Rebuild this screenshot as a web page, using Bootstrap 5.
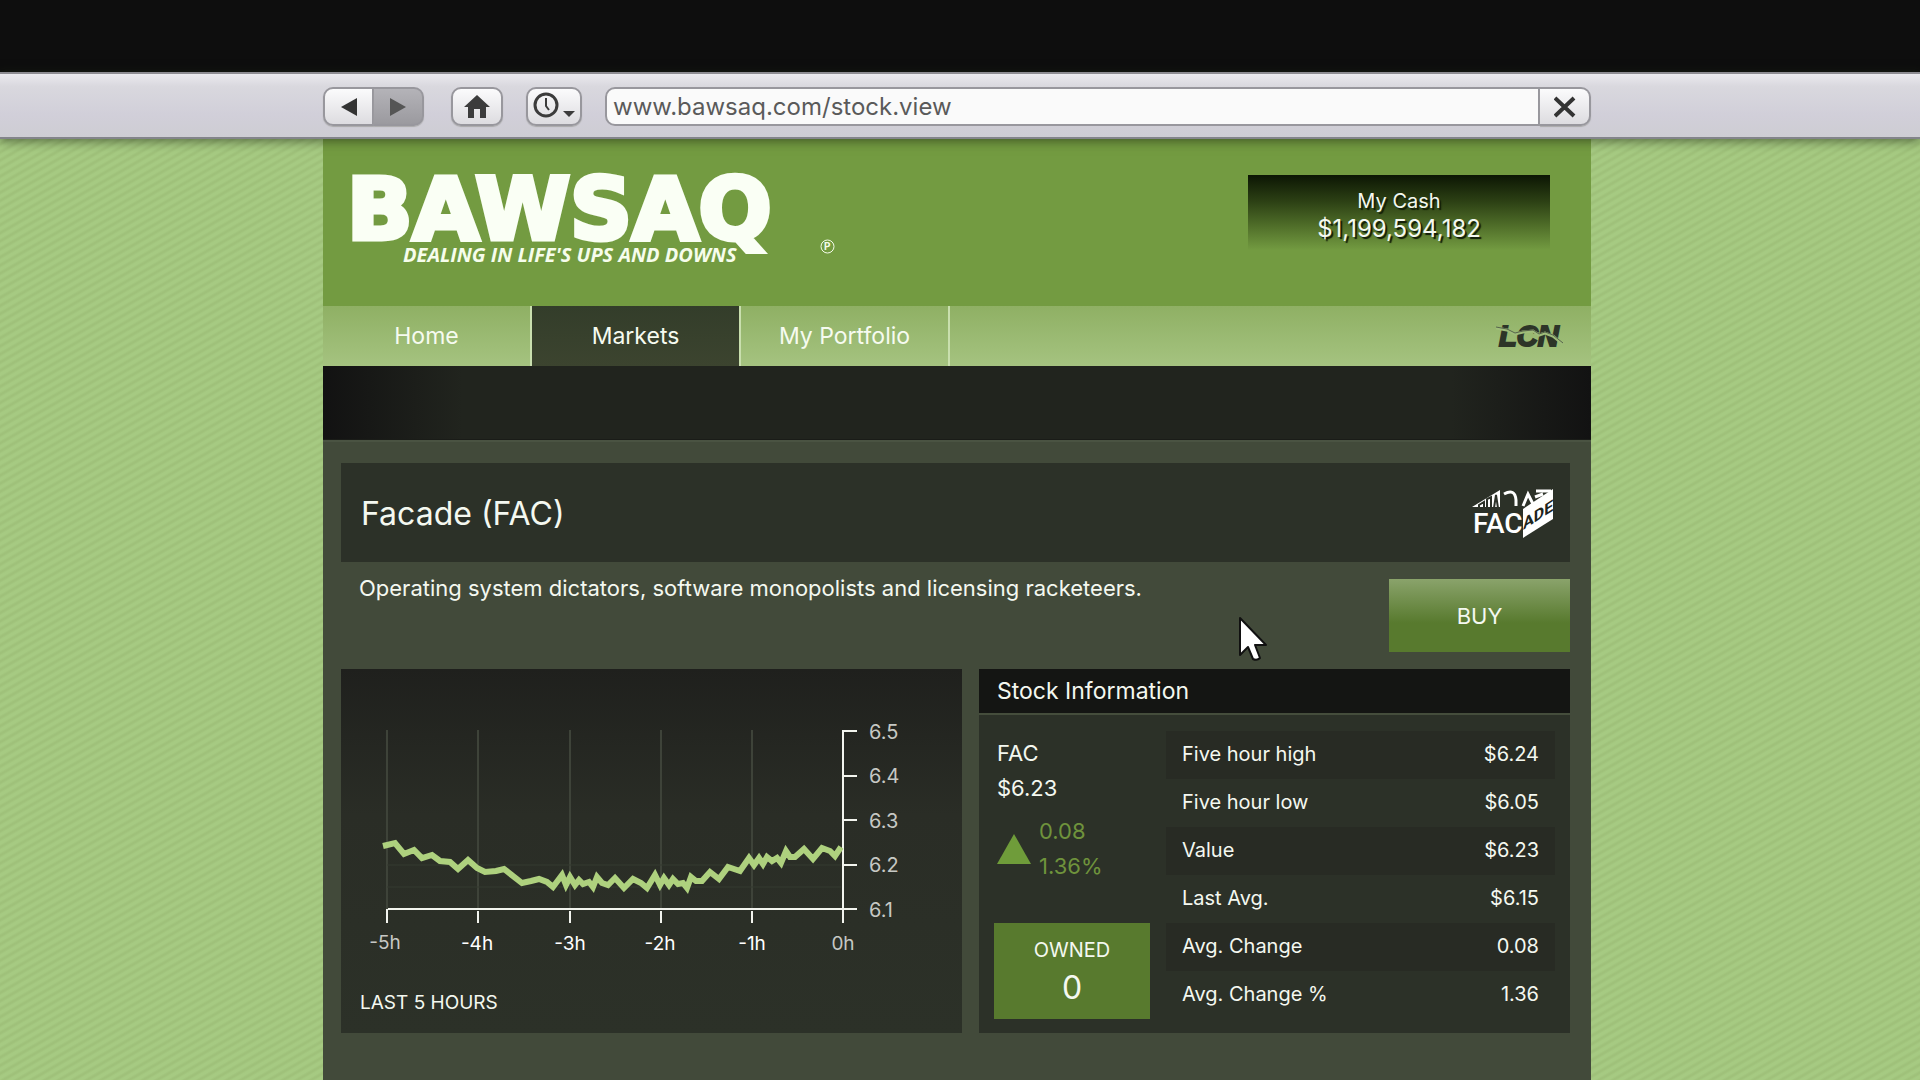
<!DOCTYPE html>
<html lang="en">
<head>
<meta charset="utf-8">
<meta name="viewport" content="width=device-width, initial-scale=1">
<title>BAWSAQ - Facade (FAC)</title>
<link rel="stylesheet" href="https://cdn.jsdelivr.net/npm/bootstrap@5.3.0/dist/css/bootstrap.min.css">
<style>
  body { font-family: Inter, "Liberation Sans", Arial, sans-serif; color: #f4f8f0; font-size: 22px; line-height: 28px; background: #0e0e0e; }
  .letterbox { height: 72px; background: #0e0e0e; }
  .browser-bar { height: 67px; padding-top: 13px; background: linear-gradient(#eae9ee, #d9d8de 20%, #d1cfd9 65%, #cecdd3); border-top: 2px solid #8d8c92; border-bottom: 2px solid #83848a; position: relative; z-index: 2; box-shadow: 0 2px 10px rgba(30, 40, 20, .6); }
  .frame-pad { padding-right: 6px; }
  .frame { width: 100%; max-width: 1268px; margin: 0 auto; }
  .chrome-btn { height: 39px; border: 2px solid #98979d; border-radius: 10px; background: linear-gradient(#fbfbfc, #dddce0); padding: 0; display: flex; align-items: center; justify-content: center; box-shadow: 0 1px 1px #aaa; }
  .nav-back { width: 51px; border-radius: 10px 0 0 10px; }
  .nav-fwd { width: 50px; border-radius: 0 10px 10px 0; background: linear-gradient(#b4b3b8, #9b9a9f); border-left-width: 0; }
  .home-btn { width: 52px; margin-left: 27px; }
  .hist-btn { width: 56px; margin-left: 23px; }
  .addr { height: 39px; margin-left: 23px; border: 2px solid #98979d; border-radius: 10px 0 0 10px; background: #fafafa; color: #5a5a5a; font-size: 24px; padding: 0 6px; min-width: 0; }
  .stop-btn { width: 51px; border-radius: 0 10px 10px 0; border-left-width: 0; }
  .site { background: repeating-linear-gradient(150deg, #a6ca82 0 2px, #9fc17a 4px 5px, #a6ca82 7px); }
  .masthead { background: #739b41; height: 167px; padding: 36px 41px 0 24px; }
  .wordmark { font-family: "DejaVu Sans", sans-serif; font-weight: 700; font-size: 86px; line-height: 68px; color: #fafff5; -webkit-text-stroke: 5px #fafff5; }
  .strap { font-family: "Open Sans", sans-serif; font-weight: 700; font-style: italic; font-size: 20px; line-height: 24px; padding-left: 56px; color: #f6fdec; }
  .reg { margin: 64px 0 0 48px; }
  .cash { width: 302px; height: 75px; padding-top: 12px; text-align: center; background: linear-gradient(#0c1604, #2c4014 35%, rgba(60, 85, 28, .7) 65%, rgba(115, 155, 65, 0)); text-shadow: 2px 2px 1px #101a06; font-size: 20px; }
  .cash-sum { font-size: 24px; }
  .tabs { height: 60px; background: linear-gradient(#8fb064, #a5c380); }
  .tab-link { width: 209px; color: #f6fbf0; text-decoration: none; text-align: center; font-size: 23px; line-height: 60px; border-right: 2px solid #c9dfae; }
  .tab-link.active { background: linear-gradient(#333d2a, #3c442f); }
  .ticker { height: 74px; background: linear-gradient(90deg, #121212, #21241e 11%, #21241e 89%, #121212); border-bottom: 1px solid #1a1c18; }
  .sheet { background: #424a3a; padding: 23px 21px 46px 18px; box-shadow: inset 0 2px 0 #4a5342; }
  .panel { background: #2c3128; }
  .title-bar { height: 99px; padding: 0 15px 0 20px; }
  .title-bar h1 { font-size: 32px; line-height: 40px; font-weight: 400; margin: 0; padding-top: 2px; }
  .desc { padding: 12px 0 0 18px; }
  .buy { width: 181px; height: 73px; margin-top: 17px; border: 0; color: #f4f8f0; background: linear-gradient(#8aa36b, #587a2e 60%, #587a2e); }
  .grid-area { display: grid; grid-template-columns: 621fr 591fr; gap: 17px; margin-top: 17px; }
  .chart-panel { min-height: 364px; background: linear-gradient(#1f201d, #2a2d26 40%, #2c3128); }
  .chart-cap { padding: 2px 19px; font-size: 19px; }
  .info-head { background: #141513; border-bottom: 2px solid #454d3c; padding: 0 18px; line-height: 44px; font-size: 23px; margin: 0; font-weight: 400; }
  .info-body { padding: 16px 15px 14px; gap: 16px; }
  .quote { width: 156px; flex: none; }
  .quote-text { padding: 5px 0 0 3px; line-height: 35px; }
  .green { color: #6f933c; }
  .owned { background: #587a2e; height: 96px; padding-top: 14px; text-align: center; font-size: 20px; line-height: 26px; }
  .owned strong { display: block; font-weight: 400; font-size: 32px; line-height: 50px; }
  .stats { font-size: 20px; }
  .stats th { font-weight: 400; padding: 0 16px 3px; height: 48px; }
  .stats td { text-align: right; padding: 0 16px 3px; }
  .stats tr:nth-child(odd) { background: #282b24; }
  .pointer { position: absolute; left: 1238px; top: 615px; z-index: 5; }
</style>
<script src="https://cdn.jsdelivr.net/npm/bootstrap@5.3.0/dist/js/bootstrap.bundle.min.js"></script>
</head>
<body>
<div class="min-vh-100 d-flex flex-column position-relative">
  <div class="letterbox"></div>
  <div class="browser-bar frame-pad">
    <form class="frame d-flex align-items-center" onsubmit="return false">
      <button type="button" class="chrome-btn nav-back" aria-label="Back"><svg width="16" height="18"><path d="M0 9 16 0V18Z" fill="#333"/></svg></button>
      <button type="button" class="chrome-btn nav-fwd" aria-label="Forward"><svg width="16" height="18"><path d="M16 9 0 0V18Z" fill="#555"/></svg></button>
      <button type="button" class="chrome-btn home-btn" aria-label="Home"><svg width="26" height="24"><path d="M13 0 26 12H22V23H16V14H10V23H4V12H0Z" fill="#3c3c3c"/></svg></button>
      <button type="button" class="chrome-btn hist-btn" aria-label="History"><svg width="46" height="30"><circle cx="15" cy="13" r="11" fill="none" stroke="#3c3c3c" stroke-width="3"/><path d="M15 6V14L18 18" fill="none" stroke="#3c3c3c" stroke-width="2"/><path d="M32 19H44L38 25Z" fill="#3c3c3c"/></svg></button>
      <input class="addr flex-grow-1" type="text" value="www.bawsaq.com/stock.view" aria-label="Address">
      <button type="button" class="chrome-btn stop-btn" aria-label="Stop"><svg width="22" height="22"><path d="M1 2 20 20M20 2 1 20" stroke="#333" stroke-width="4"/></svg></button>
    </form>
  </div>
  <div class="site frame-pad flex-grow-1 d-flex">
    <div class="frame d-flex flex-column">
      <header class="masthead d-flex justify-content-between">
        <div class="d-flex">
          <div>
            <div class="wordmark">BAWSAQ</div>
            <div class="strap">DEALING IN LIFE'S UPS AND DOWNS</div>
          </div>
          <svg class="reg" width="15" height="15" viewBox="0 0 15 15"><circle cx="7.500" cy="7.500" r="6.500" fill="none" stroke="#f4fbe9"/><text x="4" y="11" font-size="10" font-weight="700" fill="#f4fbe9">P</text></svg>
        </div>
        <div class="cash"><div>My Cash</div><div class="cash-sum">$1,199,594,182</div></div>
      </header>
      <nav class="tabs d-flex">
        <a class="tab-link" href="#">Home</a>
        <a class="tab-link active" href="#">Markets</a>
        <a class="tab-link" href="#">My Portfolio</a>
        <svg class="ms-auto me-4 align-self-center" width="72" height="34" viewBox="0 0 72 34" aria-label="LCN"><text x="4" y="27" font-family="Liberation Sans" font-size="29" font-weight="700" font-style="italic" fill="#2d3528" stroke="#2d3528" stroke-width="2">LCN</text><path d="M1 9 12 11 20 15 28 13 38 12 44 16 50 14 58 17 68 25" fill="none" stroke="#9fbd7a" stroke-width="3"/><path d="M1 8 12 10 20 14 28 12 38 11 44 15 50 13 58 16 68 24" fill="none" stroke="#55634a"/></svg>
      </nav>
      <div class="ticker"></div>
      <main class="sheet flex-grow-1">
        <div class="panel title-bar d-flex align-items-center justify-content-between">
          <h1>Facade (FAC)</h1>
          <svg width="84" height="52" viewBox="0 0 84 52" aria-label="Facade">
            <path d="M1 20 29 3V20Z" fill="#fff"/>
            <path d="M8 21V18L13 15V21M16 21V12L20 10V21M23 21 25 8 27 21" stroke="#2c3128" stroke-width="2" fill="none"/>
            <path d="M33 7Q44 1 45 13V19M52 19 57 7 62 17M65 4H80M64 10 72 7" stroke="#fff" stroke-width="3" fill="none"/>
            <path d="M52 22 82 2V32L52 51Z" fill="#fff"/>
            <g font-family="Roboto" font-weight="500">
              <text x="2" y="46" font-size="28" fill="#fff">FAC</text>
              <text font-size="16" font-weight="700" fill="#20241d" transform="translate(52 43) skewY(-33)">ADE</text>
            </g>
          </svg>
        </div>
        <div class="d-flex justify-content-between">
          <p class="desc mb-0">Operating system dictators, software monopolists and licensing racketeers.</p>
          <button type="button" class="buy">BUY</button>
        </div>
        <div class="grid-area">
          <section class="chart-panel">
            <svg class="w-100 d-block" viewBox="0 0 621 318" font-size="20" fill="#c6c8c4">
              <path d="M46 61V240M137 61V240M229 61V240M320 61V240M411 61V240" stroke="#3e4339" stroke-width="2"/>
              <path d="M46 196H500M46 218H500" stroke="#343a30"/>
              <path d="M47 240H516M46 240V254M137 242V254M229 242V254M320 242V254M411 242V254M502 254V61M501 62H516M501 107H516M501 151H516M501 196H516" fill="none" stroke="#f2f4ee" stroke-width="2"/>
              <polyline fill="none" stroke="#aed17e" stroke-width="6" points="42,177 54,174 63,185 73,181 81,189 91,186 99,192 109,193 117,200 127,191 136,199 144,203 155,202 163,200 181,214 190,212 198,210 206,213 212,218 221,206 225,216 229,208 234,216 238,211 242,215 248,213 252,218 256,208 261,214 267,216 274,209 283,219 292,210 300,214 306,219 314,206 319,216 323,209 328,216 332,210 337,215 342,214 346,219 350,208 355,212 361,212 369,203 378,210 387,198 399,202 408,189 413,196 418,189 422,195 426,188 431,192 436,189 440,194 445,182 449,188 454,188 463,180 472,190 481,179 489,182 494,187 500,178"/>
              <g><text x="528" y="70">6.5</text><text x="528" y="114">6.4</text><text x="528" y="159">6.3</text><text x="528" y="203">6.2</text><text x="528" y="248">6.1</text></g>
              <g text-anchor="middle" font-size="19"><text x="44" y="280">-5h</text><text x="502" y="281">0h</text>
              <g fill="#fff"><text x="136" y="281">-4h</text><text x="229" y="281">-3h</text><text x="319" y="281">-2h</text><text x="411" y="281">-1h</text></g></g>
            </svg>
            <div class="chart-cap">LAST 5 HOURS</div>
          </section>
          <section class="panel">
            <h2 class="info-head">Stock Information</h2>
            <div class="info-body d-flex">
              <div class="quote d-flex flex-column justify-content-between">
                <div class="quote-text">
                  <div>FAC</div>
                  <div>$6.23</div>
                  <div class="green d-flex align-items-center mt-2 gap-2">
                    <svg width="34" height="30"><path d="M17 0 34 30H0Z" fill="#6f9c3a"/></svg>
                    <div>0.08<br>1.36%</div>
                  </div>
                </div>
                <div class="owned">OWNED<strong>0</strong></div>
              </div>
              <table class="stats flex-grow-1">
                <tbody>
                <tr><th scope="row">Five hour high</th><td>$6.24</td></tr>
                <tr><th scope="row">Five hour low</th><td>$6.05</td></tr>
                <tr><th scope="row">Value</th><td>$6.23</td></tr>
                <tr><th scope="row">Last Avg.</th><td>$6.15</td></tr>
                <tr><th scope="row">Avg. Change</th><td>0.08</td></tr>
                <tr><th scope="row">Avg. Change %</th><td>1.36</td></tr>
                </tbody>
              </table>
            </div>
          </section>
        </div>
      </main>
    </div>
  </div>
  <svg class="pointer" width="32" height="48" viewBox="0 0 32 48"><path d="M2 3V40L10 32 15 44Q19 46 22 43L17 30H28Z" fill="#fff" stroke="#111" stroke-width="2" stroke-linejoin="round"/></svg>
</div>
</body>
</html>
